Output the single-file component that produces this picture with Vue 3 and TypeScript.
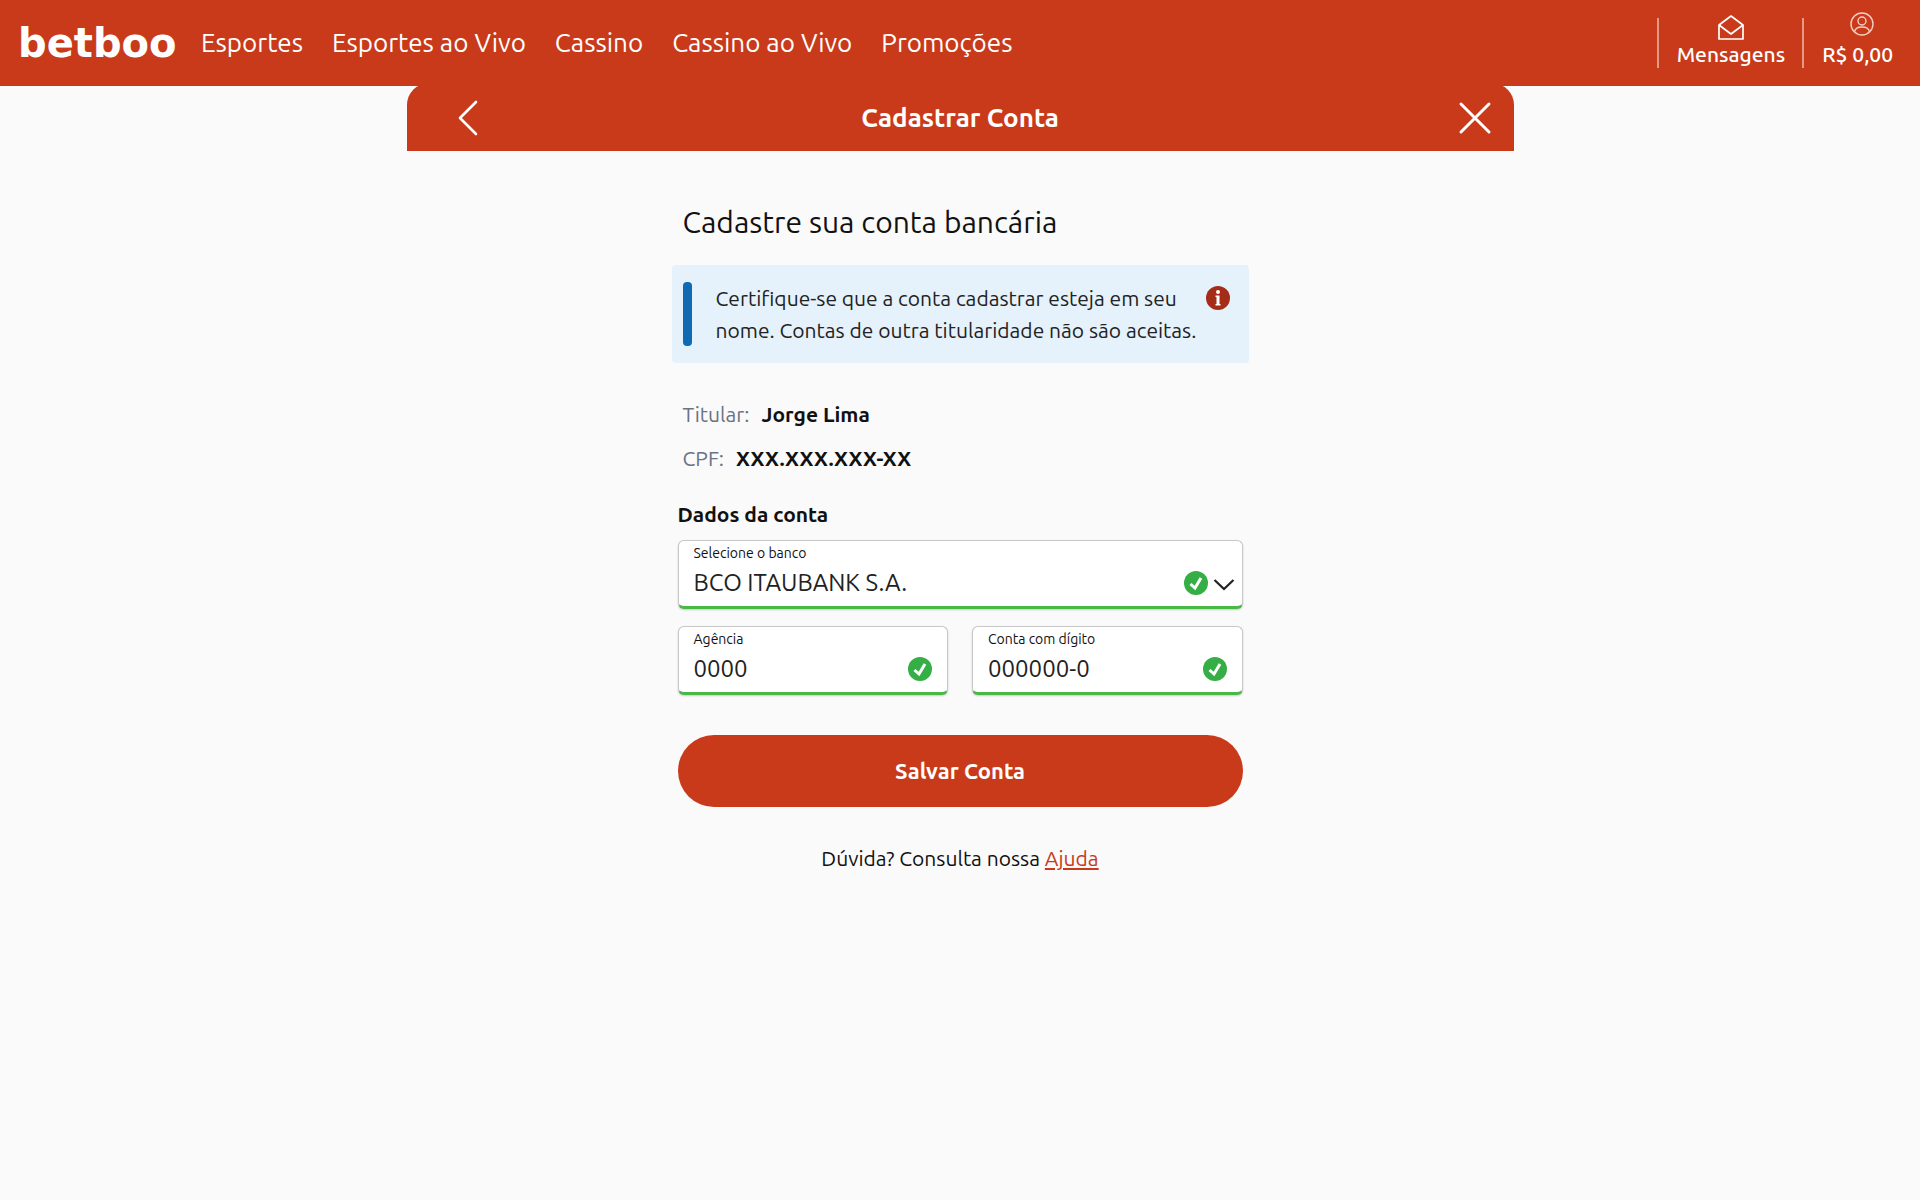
<script setup lang="ts">
import { ref } from 'vue'

const links: string[] = ['Esportes', 'Esportes ao Vivo', 'Cassino', 'Cassino ao Vivo', 'Promoções']
const banks: string[] = ['BCO ITAUBANK S.A.']

const bank = ref<string>(banks[0])
const agency = ref<string>('0000')
const account = ref<string>('000000-0')
</script>

<template>
  <div class="page">
    <header class="topbar">
      <a class="logo" href="#">betboo</a>
      <nav class="nav">
        <a v-for="link in links" :key="link" href="#">{{ link }}</a>
      </nav>
      <div class="tools">
        <a class="tool" href="#">
          <svg width="28" height="28" viewBox="0 0 28 28" fill="none" stroke="currentColor" stroke-width="1.7" stroke-linejoin="round">
            <path d="M2 11 14 2l12 9v14H2z" />
            <path d="m2 11 12 9 12-9" />
          </svg>
          <span>Mensagens</span>
        </a>
        <a class="tool account" href="#">
          <svg width="32" height="28" viewBox="0 0 32 28" fill="none" stroke="currentColor" stroke-width="1.4">
            <circle cx="20" cy="12" r="11" />
            <circle cx="20" cy="9" r="4" />
            <path d="M12.500 20c.5-4 3.500-5 7.500-5s7 1 7.500 5" />
          </svg>
          <span>R$ 0,00</span>
        </a>
      </div>
    </header>

    <main class="panel">
      <div class="titlebar">
        <button type="button" class="icon-button" aria-label="Voltar">
          <svg width="40" height="40" viewBox="0 0 40 40" fill="none" stroke="currentColor" stroke-width="2.600" stroke-linecap="round" stroke-linejoin="round">
            <path d="M29 4 13 20l16 16" />
          </svg>
        </button>
        <h1>Cadastrar Conta</h1>
        <button type="button" class="icon-button close" aria-label="Fechar">
          <svg width="40" height="40" viewBox="0 0 40 40" fill="none" stroke="currentColor" stroke-width="3" stroke-linecap="round">
            <path d="m7 6 28 28M35 6 7 34" />
          </svg>
        </button>
      </div>

      <div class="content">
        <h2>Cadastre sua conta bancária</h2>
        <div class="notice">
          <span class="bar"></span>
          <p>Certifique-se que a conta cadastrar esteja em seu<br />nome. Contas de outra titularidade não são aceitas.</p>
          <svg class="info" width="24" height="24" viewBox="0 0 24 24">
            <circle cx="12" cy="12" r="12" fill="#a52c17" />
            <circle cx="12" cy="6" r="2" fill="#fff" />
            <path d="M9.500 9.500h4V18h1v1.500h-5V18h1v-7h-1z" fill="#fff" />
          </svg>
        </div>

        <dl class="holder">
          <div><dt>Titular:</dt><dd>Jorge Lima</dd></div>
          <div><dt>CPF:</dt><dd>XXX.XXX.XXX-XX</dd></div>
        </dl>

        <form class="form" @submit.prevent>
          <h3>Dados da conta</h3>
          <div class="field bank">
            <label for="bank">Selecione o banco</label>
            <div class="control">
              <select id="bank" v-model="bank">
                <option v-for="name in banks" :key="name">{{ name }}</option>
              </select>
              <svg width="24" height="24" viewBox="0 0 24 24">
                <circle cx="12" cy="12" r="12" fill="#35ae45" />
                <path d="m6.500 13 4.500 4 6-10" fill="none" stroke="#fff" stroke-width="3" />
              </svg>
              <svg width="24" height="24" viewBox="0 0 24 24">
                <path d="m2.500 9 9.500 9 9.500-9" fill="none" stroke="#222" stroke-width="2.200" />
              </svg>
            </div>
          </div>
          <div class="pair">
            <div class="field">
              <label for="agency">Agência</label>
              <div class="control">
                <input id="agency" v-model="agency" type="text" />
                <svg width="24" height="24" viewBox="0 0 24 24">
                  <circle cx="12" cy="12" r="12" fill="#35ae45" />
                  <path d="m6.500 13 4.500 4 6-10" fill="none" stroke="#fff" stroke-width="3" />
                </svg>
              </div>
            </div>
            <div class="field">
              <label for="account">Conta com dígito</label>
              <div class="control">
                <input id="account" v-model="account" type="text" />
                <svg width="24" height="24" viewBox="0 0 24 24">
                  <circle cx="12" cy="12" r="12" fill="#35ae45" />
                  <path d="m6.500 13 4.500 4 6-10" fill="none" stroke="#fff" stroke-width="3" />
                </svg>
              </div>
            </div>
          </div>
          <button type="submit" class="save">Salvar Conta</button>
        </form>
        <p class="help">Dúvida? Consulta nossa <a href="#">Ajuda</a></p>
      </div>
    </main>
  </div>
</template>

<style>
body {
  margin: 0;
  background: #fafafa;
}
</style>

<style scoped>
* {
  box-sizing: border-box;
}
.page {
  min-height: 100vh;
  background: #fafafa;
  color: #111;
  font-family: Ubuntu, 'Noto Sans', sans-serif;
  font-size: 21px;
  line-height: 32px;
}
h1, h2, h3, p, dl, dd {
  margin: 0;
}
.topbar {
  display: flex;
  align-items: center;
  height: 86px;
  padding: 0 9px 0 18px;
  background: #c93a1a;
  color: #fff;
}
.topbar a {
  color: #fff;
  text-decoration: none;
}
.logo {
  width: 183px;
  font-family: 'DejaVu Sans', sans-serif;
  font-size: 40px;
  font-weight: 700;
  line-height: 40px;
}
.nav {
  display: flex;
  gap: 29px;
  padding-bottom: 1px;
  font-size: 26px;
  white-space: nowrap;
}
.tools {
  display: flex;
  margin-left: auto;
}
.tool {
  display: flex;
  flex-direction: column;
  align-items: center;
  height: 50px;
  padding: 0 17px 0 18px;
  border-left: 2px solid #e59a87;
  line-height: 24px;
  font-weight: 500;
  white-space: nowrap;
}
.tool svg {
  flex: none;
  margin-top: -4px;
}
.tool.account {
  padding-right: 18px;
}
.account svg {
  margin-top: -6px;
  margin-bottom: 2px;
}
.tool.account svg {
  color: #f6cfc4;
}
.panel {
  max-width: 1107px;
  margin: 0 auto;
}
.titlebar {
  display: grid;
  grid-template-columns: 1fr auto 1fr;
  align-items: center;
  height: 68px;
  margin-top: -3px;
  padding: 2px 20px 0;
  border-radius: 22px 22px 0 0;
  background: #c93a1a;
  color: #fff;
}
.titlebar h1 {
  font-size: 26px;
  font-weight: 700;
}
.icon-button {
  display: flex;
  justify-self: start;
  margin-left: 20px;
  padding: 0;
  border: 0;
  background: none;
  color: #fff;
}
.close {
  justify-self: end;
  margin-left: 0;
}
.content {
  max-width: 577px;
  margin: 0 auto;
  padding-top: 51px;
}
h2 {
  padding: 0 11px;
  font-size: 30px;
  font-weight: 400;
  line-height: 40px;
}
.notice {
  display: flex;
  margin-top: 23px;
  padding: 17px 19px 17px 11px;
  border-radius: 4px;
  background: #e5f1fb;
}
.notice p {
  flex: 1;
  min-width: 0;
  padding-left: 24px;
  color: #222;
  white-space: nowrap;
}
.bar {
  width: 9px;
  border-radius: 4px;
  background: #0f6ab4;
}
.info {
  flex: none;
  margin-top: 4px;
}
.holder {
  margin-top: 35px;
  padding: 0 11px;
}
.holder div {
  display: flex;
  gap: 12px;
  margin-bottom: 12px;
}
dt {
  color: #6b7280;
}
dd {
  font-weight: 700;
}
.form {
  padding: 0 6px;
}
h3 {
  margin-top: 24px;
  font-size: 21px;
  font-weight: 700;
}
.field {
  min-width: 0;
  height: 69px;
  padding: 4px 15px 0;
  border: 1px solid #c8c8c8;
  border-bottom: 3px solid #4ab847;
  border-radius: 6px;
  background: #fff;
  box-shadow: 0 1px 2px #0003;
}
.bank {
  margin-top: 10px;
  padding-right: 6px;
}
.field label {
  display: block;
  font-size: 14px;
  line-height: 16px;
}
.control {
  display: flex;
  align-items: center;
  gap: 4px;
  margin-top: 6px;
}
.control svg {
  flex: none;
}
input,
select {
  flex: 1;
  width: 100%;
  min-width: 0;
  height: 32px;
  padding: 0;
  border: 0;
  outline: 0;
  appearance: none;
  background: none;
  color: #222;
  font: inherit;
  font-size: 24px;
}
.pair {
  display: grid;
  grid-template-columns: 1fr 1fr;
  gap: 24px;
  margin-top: 17px;
}
.save {
  display: block;
  width: 100%;
  height: 72px;
  margin-top: 40px;
  border: 0;
  border-radius: 36px;
  background: #c93a1a;
  color: #fff;
  font: inherit;
  font-size: 22px;
  font-weight: 700;
}
.help {
  margin-top: 35px;
  text-align: center;
}
.help a {
  color: #c93a1a;
}
</style>
